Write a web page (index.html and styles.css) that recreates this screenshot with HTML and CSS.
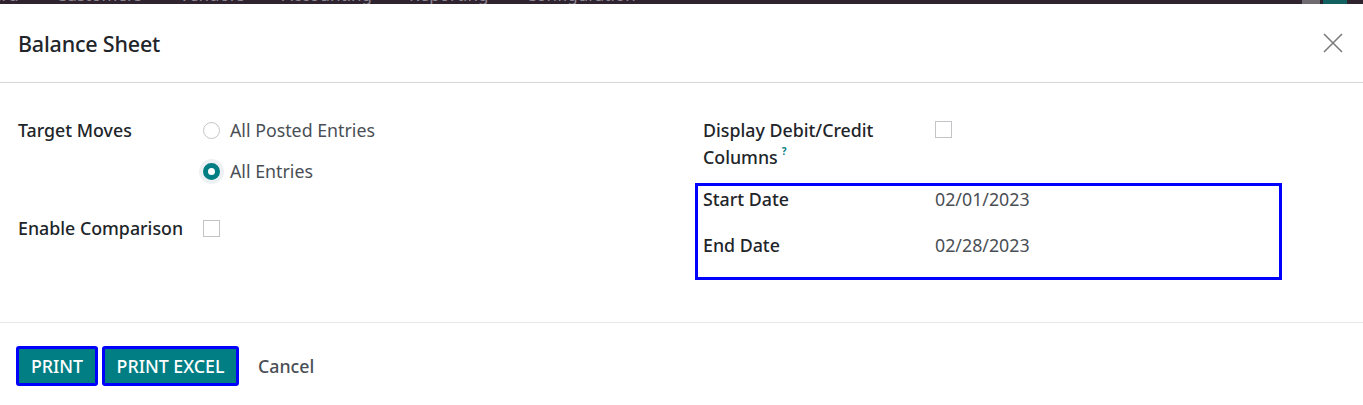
FILE: index.html
```html
<!DOCTYPE html>
<html>
<head>
<meta charset="utf-8">
<link rel="stylesheet" href="styles.css">
</head>
<body>
<div class="navbar">
  <div class="nav-items">
    <span class="nav-item first">ard</span>
    <span class="nav-item">Customers</span>
    <span class="nav-item">Vendors</span>
    <span class="nav-item">Accounting</span>
    <span class="nav-item">Reporting</span>
    <span class="nav-item">Configuration</span>
  </div>
  <div class="nav-right">
    <span class="nav-gray"></span>
    <span class="nav-teal"></span>
  </div>
</div>
<div class="modal">
  <header class="modal-header">
    <h4 class="modal-title">Balance Sheet</h4>
    <button class="close-btn" aria-label="Close">
      <svg width="20" height="20" viewBox="0 0 20 20"><path d="M1 1 L19 19 M19 1 L1 19" stroke="#7b7b7b" stroke-width="1.6" fill="none"/></svg>
    </button>
  </header>
  <main class="modal-body">
    <div class="group group-left">
      <div class="row row-target">
        <div class="label">Target Moves</div>
        <div class="radios">
          <label class="radio-item"><span class="radio"></span><span class="value">All Posted Entries</span></label>
          <label class="radio-item"><span class="radio checked"></span><span class="value">All Entries</span></label>
        </div>
      </div>
      <div class="row row-compare">
        <div class="label">Enable Comparison</div>
        <div class="field"><span class="checkbox"></span></div>
      </div>
    </div>
    <div class="group group-right">
      <div class="row row-debit">
        <div class="label label-wide">Display Debit/Credit Columns<span class="help">?</span></div>
        <div class="field"><span class="checkbox"></span></div>
      </div>
      <div class="dates">
        <div class="date-row">
          <div class="label label-wide">Start Date</div>
          <div class="value">02/01/2023</div>
        </div>
        <div class="date-row">
          <div class="label label-wide">End Date</div>
          <div class="value">02/28/2023</div>
        </div>
      </div>
    </div>
  </main>
  <footer class="modal-footer">
    <button class="btn btn-primary btn-print">PRINT</button>
    <button class="btn btn-primary btn-excel">PRINT EXCEL</button>
    <button class="btn btn-link">Cancel</button>
  </footer>
</div>
</body>
</html>
```
FILE: styles.css
```css
* { box-sizing: border-box; }
html, body { margin: 0; padding: 0; background: #fff; }
body {
  font-family: "Noto Sans", "Open Sans", sans-serif;
  font-size: 17.8px;
  color: #212529;
  width: 1363px;
  height: 405px;
  overflow: hidden;
}

.navbar {
  height: 4px;
  background: #2f2330;
  display: flex;
  justify-content: space-between;
  overflow: hidden;
}
.nav-items {
  display: flex;
  gap: 37px;
  margin-top: -15px;
  margin-left: -8px;
  font-size: 17px;
  line-height: 20px;
  color: #8d8590;
}
.nav-right { display: flex; gap: 3px; margin-right: 16px; }
.nav-gray { width: 18px; height: 4px; background: #6f6a70; }
.nav-teal { width: 24px; height: 4px; background: #12605f; }

.modal-header {
  height: 79px;
  padding: 0 20px 0 18px;
  display: flex;
  align-items: center;
  justify-content: space-between;
  border-bottom: 1px solid #d5d6da;
}
.modal-title {
  margin: 0;
  font-size: 21.5px;
  font-weight: 500;
  color: #212529;
  letter-spacing: -0.2px;
}
.close-btn {
  border: 0;
  background: none;
  padding: 0;
  width: 20px;
  height: 20px;
  display: flex;
}

.modal-body {
  height: 240px;
  padding: 34px 0 0 18px;
  display: flex;
  border-bottom: 1px solid #e7e7e9;
}
.group-left { width: 677px; flex: none; }
.group-right { width: 595px; flex: none; padding-left: 8px; }

.row { display: flex; line-height: 27px; }
.label { font-weight: 500; color: #212529; }
.group-left .label { width: 185px; flex: none; }
.label-wide { width: 232px; flex: none; }

.radios { display: flex; flex-direction: column; gap: 14px; }
.radio-item { display: flex; align-items: center; gap: 10px; }
.value { color: #4a4f55; }
.radio {
  width: 17px; height: 17px;
  border-radius: 50%;
  border: 1px solid #c3c4c7;
  background: #fff;
}
.radio.checked {
  border: 5px solid #017e84;
  box-shadow: 0 0 0 4px #eef1f3;
}

.row-compare { margin-top: 30px; }
.field { display: flex; align-items: center; height: 27px; }
.checkbox {
  width: 17px; height: 17px;
  border: 1px solid #c3c4c7;
  background: #fff;
}
.row-debit .label { padding-right: 30px; }
.row-debit .field { align-items: flex-start; padding-top: 4px; }
.help {
  color: #017e84;
  font-size: 10px;
  font-weight: 700;
  margin-left: 4px;
  vertical-align: 9px;
  line-height: 0;
}

.dates {
  margin-top: 12px;
  margin-left: -8px;
  width: 587px;
  border: 3px solid #0000ff;
  height: 97px;
  padding: 0 0 0 5px;
  display: flex;
  flex-direction: column;
}
.date-row { display: flex; line-height: 27px; height: 46px; }

.modal-footer {
  display: flex;
  align-items: center;
  gap: 4px;
  padding: 23px 0 0 16px;
}
.btn {
  font-family: inherit;
  font-size: 17.8px;
  font-weight: 500;
  height: 40px;
  border-radius: 3px;
  cursor: pointer;
  white-space: nowrap;
}
.btn-primary {
  background: #017e84;
  color: #fff;
  border: 3px solid #0000ff;
  padding: 0;
}
.btn-print { width: 82px; }
.btn-excel { width: 137px; }
.btn-link {
  background: none;
  border: 0;
  color: #4a4f55;
  padding: 0 0 0 15px;
}
```
